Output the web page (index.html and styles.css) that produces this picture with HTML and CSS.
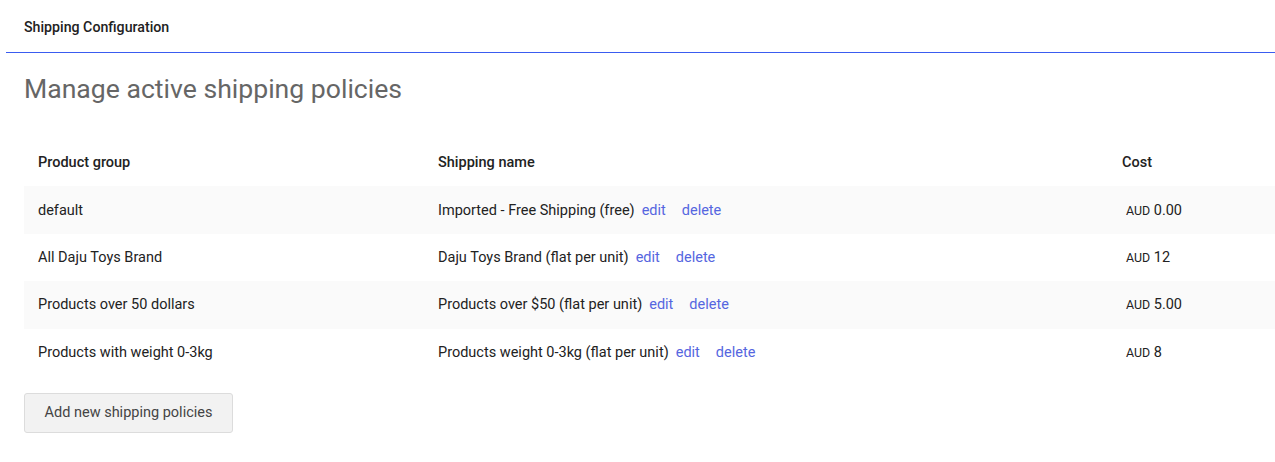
FILE: index.html
```html
<!DOCTYPE html>
<html>
<head>
<meta charset="utf-8">
<link rel="stylesheet" href="styles.css">
</head>
<body>
<div class="page">
  <div class="topbar"><span class="topbar-title">Shipping Configuration</span></div>
  <div class="rule"></div>
  <main class="content">
    <h1 class="heading">Manage active shipping policies</h1>
    <div class="table">
      <div class="row head">
        <div class="cell">Product group</div>
        <div class="cell">Shipping name</div>
        <div class="cell">Cost</div>
      </div>
      <div class="row alt">
        <div class="cell">default</div>
        <div class="cell">Imported - Free Shipping (free)<a class="link edit">edit</a><a class="link del">delete</a></div>
        <div class="cell cost"><span class="cur">AUD</span> 0.00</div>
      </div>
      <div class="row">
        <div class="cell">All Daju Toys Brand</div>
        <div class="cell">Daju Toys Brand (flat per unit)<a class="link edit">edit</a><a class="link del">delete</a></div>
        <div class="cell cost"><span class="cur">AUD</span> 12</div>
      </div>
      <div class="row alt">
        <div class="cell">Products over 50 dollars</div>
        <div class="cell">Products over $50 (flat per unit)<a class="link edit">edit</a><a class="link del">delete</a></div>
        <div class="cell cost"><span class="cur">AUD</span> 5.00</div>
      </div>
      <div class="row">
        <div class="cell">Products with weight 0-3kg</div>
        <div class="cell">Products weight 0-3kg (flat per unit)<a class="link edit">edit</a><a class="link del">delete</a></div>
        <div class="cell cost"><span class="cur">AUD</span> 8</div>
      </div>
    </div>
    <button class="btn">Add new shipping policies</button>
  </main>
</div>
</body>
</html>
```

FILE: styles.css
```css
html, body {
  margin: 0;
  padding: 0;
  background: #ffffff;
}
body {
  font-family: Roboto, "Liberation Sans", sans-serif;
  color: #222222;
}
.page {
  padding-left: 6px;
}
.topbar {
  height: 52px;
  display: flex;
  align-items: center;
  padding-left: 18px;
  padding-top: 2px;
  box-sizing: border-box;
}
.rule {
  height: 1px;
  background: #3a5cf0;
}
.topbar-title {
  font-size: 14.2px;
  font-weight: 500;
  color: #222;
}
.content {
  padding-left: 18px;
}
.heading {
  margin: 20px 0 35px 0;
  font-size: 26.6px;
  font-weight: 400;
  line-height: 31px;
  color: #666666;
}
.table {
  display: flex;
  flex-direction: column;
}
.row {
  display: grid;
  grid-template-columns: 400px 684px 1fr;
  height: 47.4px;
  align-items: center;
  font-size: 14.5px;
}
.row.alt {
  background: #fafafa;
}
.row.head {
  font-weight: 500;
}
.cell {
  padding-left: 14px;
  white-space: nowrap;
}
.cost {
  padding-left: 18px;
}
.cur {
  font-size: 12.4px;
}
.link {
  color: #5566e0;
  cursor: pointer;
}
.edit {
  margin-left: 7px;
}
.del {
  margin-left: 16px;
}
.btn {
  margin-top: 17px;
  height: 40px;
  width: 209px;
  background: #f2f2f2;
  border: 1px solid #dcdcdc;
  border-radius: 3px;
  font-family: Roboto, "Liberation Sans", sans-serif;
  font-size: 14.5px;
  color: #444444;
  padding: 0;
}
```
